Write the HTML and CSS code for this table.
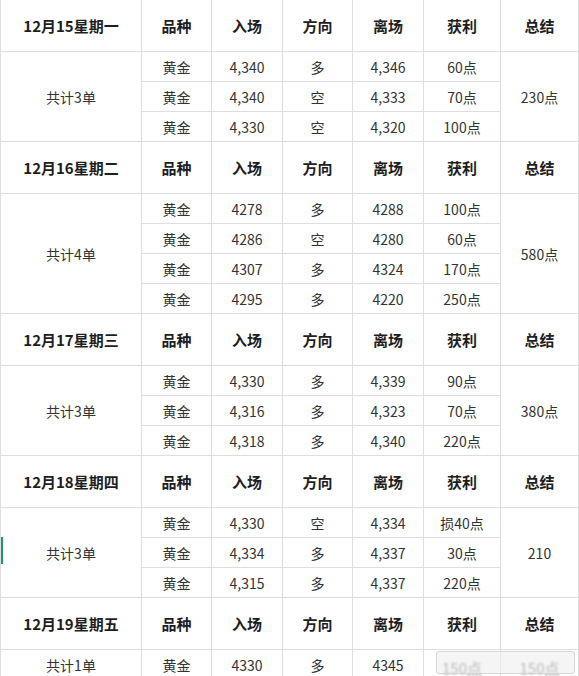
FILE: index.html
```html
<!DOCTYPE html>
<html lang="zh-CN">
<head>
<meta charset="utf-8">
<title>交易记录</title>
<link rel="stylesheet" href="styles.css">
</head>
<body>
<div class="page">
<table class="trades">
  <colgroup>
    <col class="c-date"><col class="c-kind"><col class="c-in"><col class="c-dir"><col class="c-out"><col class="c-profit"><col class="c-sum">
  </colgroup>
  <tbody>
    <tr class="head"><th>12月15星期一</th><th>品种</th><th>入场</th><th>方向</th><th>离场</th><th>获利</th><th>总结</th></tr>
    <tr class="row"><td rowspan="3">共计3单</td><td>黄金</td><td>4,340</td><td>多</td><td>4,346</td><td>60点</td><td rowspan="3">230点</td></tr>
    <tr class="row"><td>黄金</td><td>4,340</td><td>空</td><td>4,333</td><td>70点</td></tr>
    <tr class="row"><td>黄金</td><td>4,330</td><td>空</td><td>4,320</td><td>100点</td></tr>

    <tr class="head"><th>12月16星期二</th><th>品种</th><th>入场</th><th>方向</th><th>离场</th><th>获利</th><th>总结</th></tr>
    <tr class="row"><td rowspan="4">共计4单</td><td>黄金</td><td>4278</td><td>多</td><td>4288</td><td>100点</td><td rowspan="4">580点</td></tr>
    <tr class="row"><td>黄金</td><td>4286</td><td>空</td><td>4280</td><td>60点</td></tr>
    <tr class="row"><td>黄金</td><td>4307</td><td>多</td><td>4324</td><td>170点</td></tr>
    <tr class="row"><td>黄金</td><td>4295</td><td>多</td><td>4220</td><td>250点</td></tr>

    <tr class="head"><th>12月17星期三</th><th>品种</th><th>入场</th><th>方向</th><th>离场</th><th>获利</th><th>总结</th></tr>
    <tr class="row"><td rowspan="3">共计3单</td><td>黄金</td><td>4,330</td><td>多</td><td>4,339</td><td>90点</td><td rowspan="3">380点</td></tr>
    <tr class="row"><td>黄金</td><td>4,316</td><td>多</td><td>4,323</td><td>70点</td></tr>
    <tr class="row"><td>黄金</td><td>4,318</td><td>多</td><td>4,340</td><td>220点</td></tr>

    <tr class="head"><th>12月18星期四</th><th>品种</th><th>入场</th><th>方向</th><th>离场</th><th>获利</th><th>总结</th></tr>
    <tr class="row"><td rowspan="3" class="marked">共计3单</td><td>黄金</td><td>4,330</td><td>空</td><td>4,334</td><td>损40点</td><td rowspan="3">210</td></tr>
    <tr class="row"><td>黄金</td><td>4,334</td><td>多</td><td>4,337</td><td>30点</td></tr>
    <tr class="row"><td>黄金</td><td>4,315</td><td>多</td><td>4,337</td><td>220点</td></tr>

    <tr class="head"><th>12月19星期五</th><th>品种</th><th>入场</th><th>方向</th><th>离场</th><th>获利</th><th>总结</th></tr>
    <tr class="row"><td>共计1单</td><td>黄金</td><td>4330</td><td>多</td><td>4345</td><td class="ghost">150点</td><td class="ghost">150点</td></tr>
  </tbody>
</table>
<div class="veil"></div>
</div>
</body>
</html>
```
FILE: styles.css
```css
html, body {
  margin: 0;
  padding: 0;
  background: #ffffff;
}

.page {
  position: relative;
  width: 579px;
  height: 676px;
  overflow: hidden;
  font-family: "Noto Sans CJK SC", "Noto Sans", sans-serif;
}

.trades {
  border-collapse: collapse;
  table-layout: fixed;
  width: 578px;
  margin-top: -1px;
  margin-left: 0;
}

.c-date { width: 141px; }
.c-kind { width: 70px; }
.c-in { width: 71px; }
.c-dir { width: 70px; }
.c-out { width: 71px; }
.c-profit { width: 77px; }
.c-sum { width: 78px; }

.trades th,
.trades td {
  border: 1px solid #dedede;
  text-align: center;
  vertical-align: middle;
  padding: 0;
}

.trades th {
  font-size: 15px;
  font-weight: 700;
  color: #1e1e1e;
}

.trades td {
  font-size: 14px;
  font-weight: 400;
  color: #333333;
}

.head {
  height: 52px;
}

.row {
  height: 30px;
}

.marked {
  position: relative;
}

.marked::before {
  content: "";
  position: absolute;
  left: 0;
  top: 29px;
  width: 2px;
  height: 27px;
  background: #1c9a6c;
}

.trades td.ghost {
  color: #6a6a6a;
  font-size: 15px;
  padding-top: 6px;
  filter: blur(1px);
}

.veil {
  position: absolute;
  left: 436px;
  top: 651px;
  width: 137px;
  height: 21px;
  border: 1px solid #d6d6d6;
  border-radius: 3px;
  background: rgba(238, 238, 238, 0.6);
}
```
